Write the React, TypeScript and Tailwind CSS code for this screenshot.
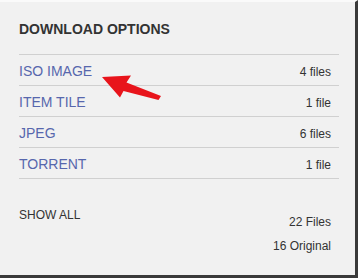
const options = [
  { label: 'ISO IMAGE', count: '4 files' },
  { label: 'ITEM TILE', count: '1 file' },
  { label: 'JPEG', count: '6 files' },
  { label: 'TORRENT', count: '1 file' },
];

// red annotation arrow pointing at the first option
function Arrow() {
  return (
    <svg className="absolute left-0 top-0 pointer-events-none" width="358" height="278" viewBox="0 0 358 278" aria-hidden="true">
      <polygon
        points="102,75 131,73.5 126.5,80.5 161,94 158.5,98 123.5,89 120,95.5"
        fill="#e8141b"
      />
    </svg>
  );
}

export default function App() {
  return (
    <div
      className="relative w-[358px] h-[278px] bg-[#f1f1f1] border-t-2 border-t-[#fafafa] border-r-[3px] border-b-[3px] border-r-[#3a3a3a] border-b-[#3a3a3a] pl-[19px] pr-[16px] text-[#333]"
      style={{ fontFamily: '"Liberation Sans", Arial, sans-serif' }}
    >
      {/* Header */}
      <div className="pt-[17px] pb-[15px] border-b border-[#d0d0d0]">
        <h2 className="text-[14px] leading-5 font-bold text-[#333]">DOWNLOAD OPTIONS</h2>
      </div>

      {/* Options list */}
      <ul>
        {options.map((o) => (
          <li key={o.label} className="flex items-baseline justify-between h-[31px] pt-[6px] pr-[8px] border-b border-[#d0d0d0]">
            <a href="#" className="text-[14px] leading-5 text-[#5767ad]">{o.label}</a>
            <span className="text-[12px] leading-5 text-[#333]">{o.count}</span>
          </li>
        ))}
      </ul>

      {/* Footer */}
      <div className="flex items-start justify-between pr-[8px]">
        <a href="#" className="pt-[24px] text-[12px] leading-6 text-[#333]">SHOW ALL</a>
        <div className="pt-[31px] flex flex-col items-end text-[12px] leading-6 text-[#333]">
          <span>22 Files</span>
          <span>16 Original</span>
        </div>
      </div>

      <Arrow />
    </div>
  );
}
